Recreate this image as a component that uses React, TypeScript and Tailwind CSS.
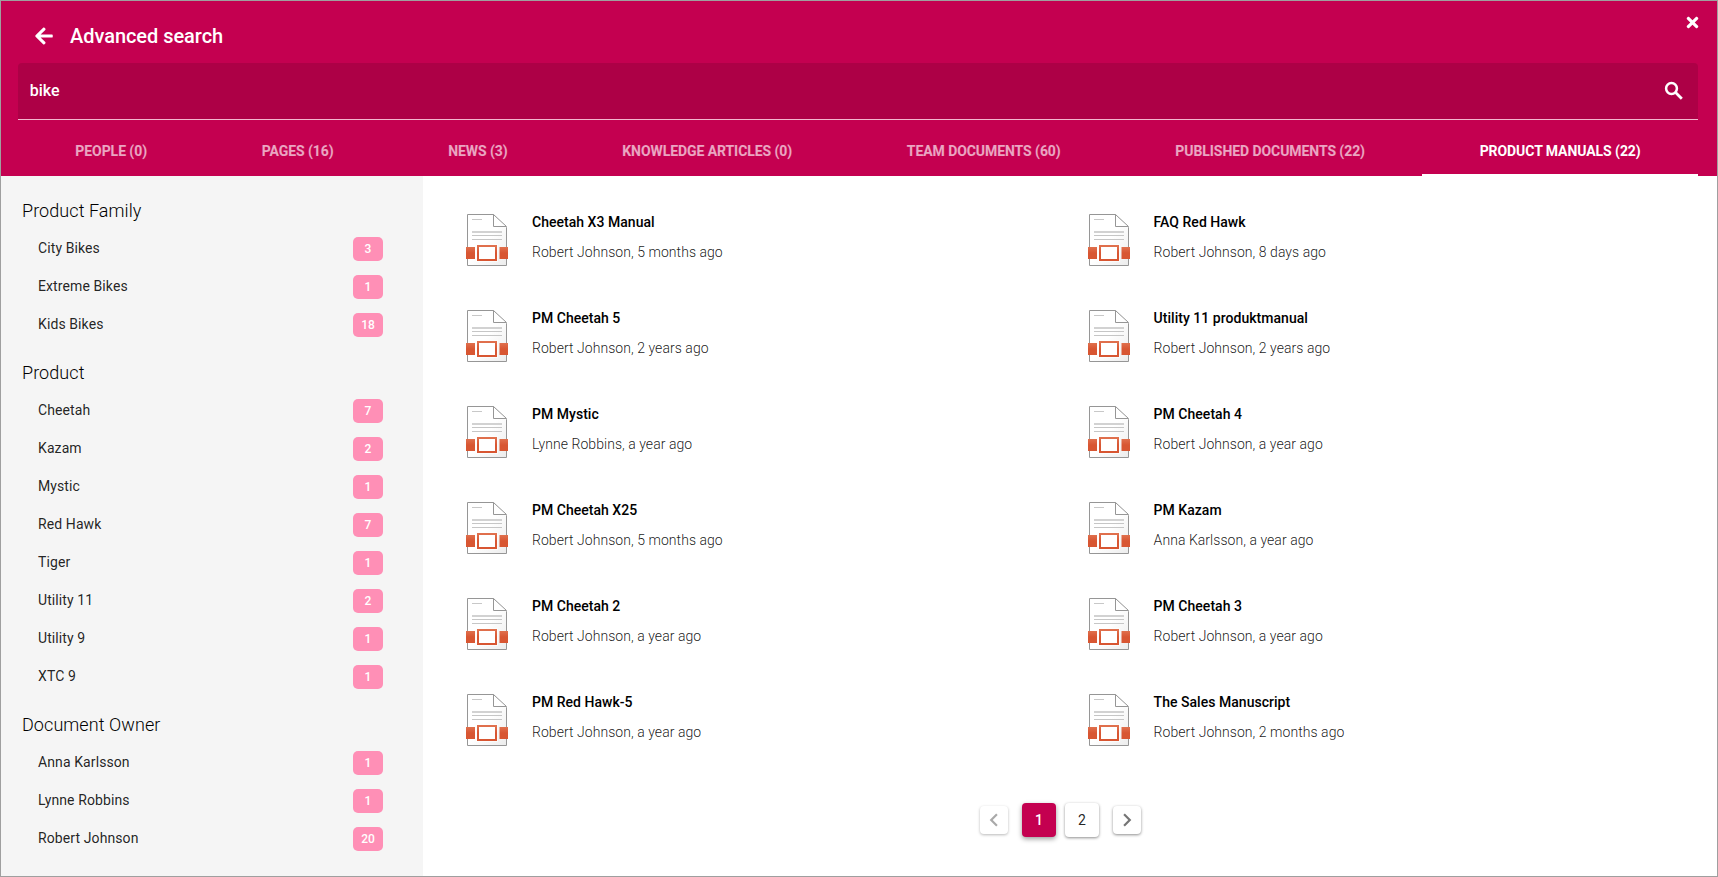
import { FaArrowLeft, FaTimes } from 'react-icons/fa';
import { MdChevronLeft, MdChevronRight } from 'react-icons/md';

const tabs = [
  'People (0)',
  'Pages (16)',
  'News (3)',
  'Knowledge Articles (0)',
  'Team Documents (60)',
  'Published Documents (22)',
  'Product Manuals (22)',
];
const activeTab = 6;

type Facet = { title: string; items: [string, number][] };

const facets: Facet[] = [
  { title: 'Product Family', items: [['City Bikes', 3], ['Extreme Bikes', 1], ['Kids Bikes', 18]] },
  {
    title: 'Product',
    items: [
      ['Cheetah', 7],
      ['Kazam', 2],
      ['Mystic', 1],
      ['Red Hawk', 7],
      ['Tiger', 1],
      ['Utility 11', 2],
      ['Utility 9', 1],
      ['XTC 9', 1],
    ],
  },
  { title: 'Document Owner', items: [['Anna Karlsson', 1], ['Lynne Robbins', 1], ['Robert Johnson', 20]] },
];

const results: [string, string][] = [
  ['Cheetah X3 Manual', 'Robert Johnson, 5 months ago'],
  ['FAQ Red Hawk', 'Robert Johnson, 8 days ago'],
  ['PM Cheetah 5', 'Robert Johnson, 2 years ago'],
  ['Utility 11 produktmanual', 'Robert Johnson, 2 years ago'],
  ['PM Mystic', 'Lynne Robbins, a year ago'],
  ['PM Cheetah 4', 'Robert Johnson, a year ago'],
  ['PM Cheetah X25', 'Robert Johnson, 5 months ago'],
  ['PM Kazam', 'Anna Karlsson, a year ago'],
  ['PM Cheetah 2', 'Robert Johnson, a year ago'],
  ['PM Cheetah 3', 'Robert Johnson, a year ago'],
  ['PM Red Hawk-5', 'Robert Johnson, a year ago'],
  ['The Sales Manuscript', 'Robert Johnson, 2 months ago'],
];

function SearchIcon() {
  return (
    <svg width="24" height="24" viewBox="0 0 24 24" fill="none" stroke="currentColor" strokeWidth="2.5" aria-hidden="true">
      <circle cx="9.5" cy="9.5" r="5.4" />
      <path d="M13.6 13.6L19.800 19.800" strokeWidth="2.800" />
    </svg>
  );
}

function DocumentIcon() {
  return (
    <svg width="42" height="54" viewBox="0 0 42 54" className="mt-px shrink-0" aria-hidden="true">
      <defs>
        <linearGradient id="paper" x1="0" y1="0" x2="1" y2="1">
          <stop offset="0.5" stopColor="#ffffff" />
          <stop offset="1" stopColor="#ececec" />
        </linearGradient>
        <linearGradient id="accent" x1="0" y1="0" x2="0" y2="1">
          <stop offset="0" stopColor="#e0704d" />
          <stop offset="0.5" stopColor="#d85632" />
          <stop offset="1" stopColor="#d85632" />
        </linearGradient>
      </defs>
      <path d="M1.5 1.5H27.5L40.5 14.5V52.5H1.5Z" fill="url(#paper)" stroke="#969696" />
      <path d="M27.5 1.5V13.5H40.5Z" fill="#ffffff" stroke="#969696" />
      <path d="M6 6.5H16" stroke="#c8c8c8" />
      <path d="M6 19H36" stroke="#d2d2d2" strokeWidth="2" />
      <path d="M6 22.5H36M6 26.5H36" stroke="#c6c6c6" />
      <path d="M0 34H9V46H0ZM33.5 34H42V46H33.5Z" fill="url(#accent)" />
      <rect x="10" y="31" width="22" height="18" fill="#ffffff" opacity="0.6" />
      <rect x="12" y="33" width="18" height="14" fill="#ffffff" stroke="url(#accent)" strokeWidth="2" />
    </svg>
  );
}

export default function App() {
  return (
    <div className="flex h-[877px] w-[1718px] flex-col overflow-hidden border border-[#9f9f9f] bg-white font-['Roboto',sans-serif]">
      <header className="flex h-[175px] shrink-0 flex-col bg-[#c40050] px-[17px] text-white">
        <div className="flex h-[62px] shrink-0 justify-between">
          <div className="flex items-start pt-[21px] pl-4">
            <FaArrowLeft className="mt-1 size-5" />
            <h1 className="ml-4 text-xl leading-7 font-medium tracking-[-0.05px]">Advanced search</h1>
          </div>
          <FaTimes className="mt-[13px] mr-[-0.5px] size-[17px]" />
        </div>
        <div className="mr-0.5 flex h-[57px] shrink-0 items-center justify-between rounded-t border-b border-[#f3b8ce] bg-[#ad0046] pr-[12.5px] pl-[11.7px]">
          <span className="text-base leading-6 font-medium">bike</span>
          <SearchIcon />
        </div>
        <nav className="mr-0.5 flex h-14 shrink-0">
          {tabs.map((t, i) => (
            <a
              key={t}
              className={
                i === activeTab
                  ? 'flex flex-auto items-center justify-center border-b-2 border-white pt-2 text-sm font-bold tracking-[-0.07px] uppercase'
                  : 'flex flex-auto items-center justify-center border-b-2 border-transparent pt-2 text-sm font-bold tracking-[-0.07px] text-white/65 uppercase'
              }
            >
              {t}
            </a>
          ))}
        </nav>
      </header>
      <div className="flex min-h-0 flex-1">
        <aside className="flex w-[422px] shrink-0 flex-col gap-[18px] bg-[#f5f5f5] pt-[23px]">
          {facets.map((f) => (
            <section key={f.title}>
              <h2 className="h-[30px] pl-[21px] text-lg leading-6 font-light tracking-[0.07px] text-black">{f.title}</h2>
              {f.items.map(([name, count]) => (
                <div key={name} className="flex h-[38px] items-center justify-between pr-10 pl-[37px]">
                  <span className="text-sm leading-5 tracking-[0.1px] text-black/87">{name}</span>
                  <span className="mt-0.5 h-6 w-[30px] rounded-[5px] bg-[#ff8fb6] text-center text-xs leading-6 font-medium text-white">
                    {count}
                  </span>
                </div>
              ))}
            </section>
          ))}
        </aside>
        <main className="flex flex-1 flex-col pt-9">
          <div className="grid auto-rows-[96px] grid-cols-[621.6px_1fr] pl-[43px]">
            {results.map(([title, meta]) => (
              <article key={title} className="flex">
                <DocumentIcon />
                <div className="ml-6 flex flex-col gap-2.5">
                  <h3 className="text-sm leading-5 font-medium tracking-[0.03px] text-black">{title}</h3>
                  <p className="text-sm leading-5 font-light tracking-[0.05px] text-black/90">{meta}</p>
                </div>
              </article>
            ))}
          </div>
          <div className="mt-[15px] flex items-center pl-[557px]">
            <button className="flex size-7 items-center justify-center rounded bg-white text-[#a9a9a9] shadow-[0_1px_3px_rgba(0,0,0,0.28)]">
              <MdChevronLeft className="size-[26px] shrink-0" />
            </button>
            <button className="ml-3.5 size-[34px] rounded bg-[#c40050] text-sm font-medium text-white shadow-[0_2px_5px_rgba(0,0,0,0.4)]">
              1
            </button>
            <button className="ml-[9px] size-[34px] rounded bg-white text-sm text-black/87 shadow-[0_1px_3px_rgba(0,0,0,0.45)]">
              2
            </button>
            <button className="ml-3.5 flex size-7 items-center justify-center rounded bg-white text-[#757575] shadow-[0_1px_3px_rgba(0,0,0,0.45)]">
              <MdChevronRight className="size-[26px] shrink-0" />
            </button>
          </div>
        </main>
      </div>
    </div>
  );
}
